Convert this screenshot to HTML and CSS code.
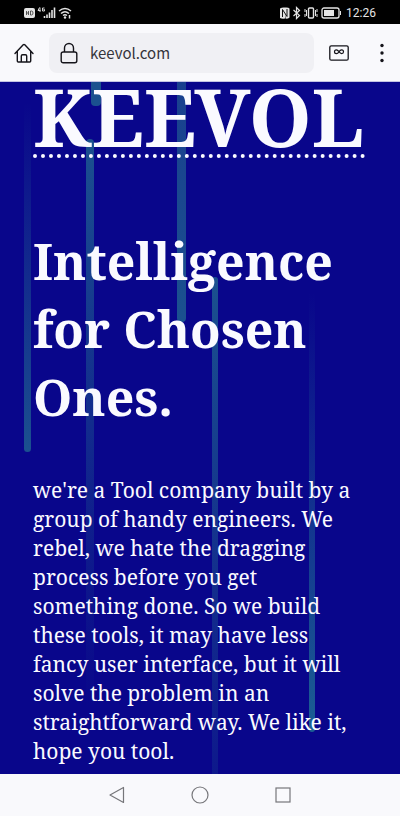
FILE: index.html
```html
<!DOCTYPE html>
<html lang="en">
<head>
<meta charset="utf-8">
<meta name="viewport" content="width=device-width, initial-scale=1">
<title>KEEVOL</title>
<link rel="stylesheet" href="styles.css">
</head>
<body>
<div class="status">
  <svg width="48" height="14" viewBox="0 0 48 14" fill="none" stroke="#e4e4e4">
    <rect x="0" y="2" width="11" height="10" rx="2" fill="#e4e4e4" stroke="none"/>
    <path d="M2.500 5v4M4.500 5v4M2.500 7h2M6.500 5v4h1q1.500 0 1.500-2t-1.500-2z" stroke="#333" stroke-width=".8"/>
    <path d="M15.500 1.500l-1.500 3h2.500M16 1.500v4.500M20.500 2h-2v3h2v-1.500h-1" stroke-width=".9"/>
    <path d="M20.500 12v-2M23 12v-3.500M25.500 12V6.500M28 12V4M30.500 12V1.500" stroke-width="1.600"/>
    <path d="M35 5q6-5 12 0M37 7.500q4-3.500 8 0M39 9.500q2-1.500 4 0" stroke-width="1.500"/>
    <circle cx="41" cy="11.500" r="1.200" fill="#e4e4e4" stroke="none"/>
    <path d="M45.500 9v3.500" stroke-width="1.500"/>
  </svg>
  <div class="status-right">
    <svg width="62" height="14" viewBox="0 0 62 14" fill="none" stroke="#e4e4e4">
      <path d="M1 2.500q2-1.500 5-1v11q-3 .5-5-.5zM5.500 1.500q4-.5 5 1v9q-1 1.500-4 1z" fill="#e4e4e4" stroke="none"/>
      <path d="M3.500 11V3.500l4.500 7V3" stroke="#111" stroke-width="1"/>
      <path d="M14.500 4l6 5.500-3 3V1.500l3 3-6 5.500" stroke-width="1.200"/>
      <rect x="29.500" y="2" width="5" height="10" rx="1" stroke-width="1.400"/>
      <path d="M27.500 4v6M36.500 4v6M26 3v3M26 8v3M38 3v3M38 8v3" stroke-width="1"/>
      <rect x="43" y="2" width="17" height="10" rx="2" stroke-width="1.300"/>
      <rect x="45" y="4" width="10" height="6" fill="#e4e4e4" stroke="none"/>
      <path d="M61.500 5v4" stroke-width="1"/>
    </svg>
    <time>12:26</time>
  </div>
</div>
<header class="toolbar">
  <button class="icon" aria-label="Home">
    <svg width="20" height="20" viewBox="0 0 20 20" fill="none" stroke="#15141a" stroke-width="1.400" stroke-linejoin="round" stroke-linecap="round"><path d="M1 10.500l8.200-8.700q.8-.8 1.600 0L19 10.500M3.300 8.300V18q0 1 1 1h11.400q1 0 1-1V8.300M7.300 19v-6q0-1.300 1.300-1.300h2.800q1.300 0 1.300 1.300v6"/></svg>
  </button>
  <label class="address">
    <svg width="18" height="22" viewBox="0 0 18 22" fill="none" stroke="#15141a" stroke-width="1.400"><rect x="1.200" y="10" width="15.600" height="10.800" rx="2"/><path d="M4.500 10V6a4.500 4.500 0 0 1 9 0v4"/></svg>
    <input type="text" value="keevol.com" aria-label="Address">
  </label>
  <button class="icon tabs" aria-label="Tabs">
    <svg width="20" height="16" viewBox="0 0 20 16" fill="none" stroke="#15141a" stroke-width="1.300"><rect x=".8" y=".8" width="18.400" height="14.400" rx="1.500"/><path d="M10 6.700C8.800 5 8.100 4.800 7.400 4.800a1.900 1.900 0 0 0 0 3.800C8.400 8.600 9.200 8 10 6.700s1.600-1.900 2.600-1.900a1.900 1.900 0 0 1 0 3.800C11.900 8.600 11.200 8.400 10 6.700z" stroke-width="1.200"/></svg>
  </button>
  <button class="icon" aria-label="Menu">
    <svg width="4" height="20" viewBox="0 0 4 20" fill="#15141a"><circle cx="2" cy="2.500" r="1.700"/><circle cx="2" cy="10" r="1.700"/><circle cx="2" cy="17.500" r="1.700"/></svg>
  </button>
</header>
<main class="hero">
  <div class="rain" aria-hidden="true">
    <i class="drop drop-a"></i><i class="drop drop-b"></i><i class="drop drop-c"></i>
    <i class="drop drop-d"></i><i class="drop drop-e"></i><i class="drop drop-f"></i>
  </div>
  <h1>KEEVOL</h1>
  <h2>Intelligence for Chosen Ones.</h2>
  <p>we're a Tool company built by a<br>group of handy engineers. We<br>rebel, we hate the dragging<br>process before you get<br>something done. So we build<br>these tools, it may have less<br>fancy user interface, but it will<br>solve the problem in an<br>straightforward way. We like it,<br>hope you tool.</p>
</main>
<nav class="system">
  <button class="icon" aria-label="Back"><svg width="18" height="18" viewBox="0 0 18 18" fill="none" stroke="#76767a" stroke-width="1.200" stroke-linejoin="round"><path d="M15.500 1.500v15L2 9z"/></svg></button>
  <button class="icon" aria-label="Home screen"><svg width="18" height="18" viewBox="0 0 18 18" fill="none" stroke="#76767a" stroke-width="1.200"><circle cx="9" cy="9" r="8"/></svg></button>
  <button class="icon" aria-label="Recent apps"><svg width="18" height="18" viewBox="0 0 18 18" fill="none" stroke="#76767a" stroke-width="1.200"><rect x="2" y="2" width="14" height="14"/></svg></button>
</nav>
</body>
</html>
```
FILE: styles.css
```css
* { box-sizing: border-box; }

body {
  margin: 0;
  min-height: 100vh;
  display: flex;
  flex-direction: column;
  background: #f9f9fc;
  font-family: "Noto Sans", sans-serif;
}

svg { display: block; flex: none; }

.status {
  display: flex;
  align-items: center;
  justify-content: space-between;
  height: 24px;
  padding: 2px 24px 0;
  background: #000;
  color: #e4e4e4;
  font-family: Roboto, sans-serif;
  font-size: 12px;
}

.status-right { display: flex; align-items: center; gap: 5px; }

.toolbar {
  display: flex;
  align-items: center;
  height: 58px;
  padding: 0 16px 0 14px;
  border-bottom: 1px solid #c3c3e3;
}

.icon {
  display: flex;
  padding: 0;
  border: 0;
  background: none;
}

.address {
  flex: 1;
  min-width: 0;
  display: flex;
  align-items: center;
  gap: 12px;
  height: 40px;
  margin-left: 15px;
  padding: 0 11px;
  border-radius: 8px;
  background: #f0f0f4;
}

.address input {
  flex: 1;
  min-width: 0;
  padding: 0;
  border: 0;
  outline: 0;
  background: none;
  color: #35343b;
  font: 15px/24px "Noto Sans CJK SC", "Noto Sans", sans-serif;
}

.tabs { margin: 0 31px 0 15px; }

.hero {
  position: relative;
  flex: 1;
  padding: 0 33px 7px;
  background: #09068b;
  color: #fafaff;
  font-family: "Noto Serif", "Droid Serif", "DejaVu Serif Condensed", "DejaVu Serif", serif;
}

.hero h1, .hero h2, .hero p { position: relative; margin: 0; white-space: nowrap; }

.hero h1 {
  height: 76px;
  margin-right: 2px;
  border-bottom: 4px dotted #fafaff;
  font-size: 80px;
  line-height: 68px;
}

.hero h2 {
  margin-top: 69px;
  font-size: 50px;
  line-height: 68px;
  white-space: normal;
}

.hero p {
  margin-top: 45px;
  font-size: 21px;
  line-height: 29px;
}

.rain { position: absolute; inset: 0; overflow: hidden; }
.drop { position: absolute; width: 8px; border-radius: 4px; }
.drop-a { left: 24px; top: 20px; width: 7px; height: 350px; background: linear-gradient(#1b518f00, #1b518f); }
.drop-b { left: 91px; top: -20px; width: 10px; height: 44px; background: #1b518f; }
.drop-c { left: 86px; top: 57px; height: 570px; background: linear-gradient(#1b518f, #1b518f00); }
.drop-d { left: 177px; top: -20px; height: 260px; width: 9px; background: linear-gradient(#193e8f, #1b518f); }
.drop-e { left: 212px; top: 195px; height: 660px; width: 6px; background: linear-gradient(#1b518f, #1b518f00); }
.drop-f { left: 309px; top: 210px; height: 440px; width: 6px; background: linear-gradient(#1b518f00, #1b5f93); }

.system {
  display: flex;
  align-items: center;
  justify-content: center;
  gap: 65px;
  height: 42px;
}
```
